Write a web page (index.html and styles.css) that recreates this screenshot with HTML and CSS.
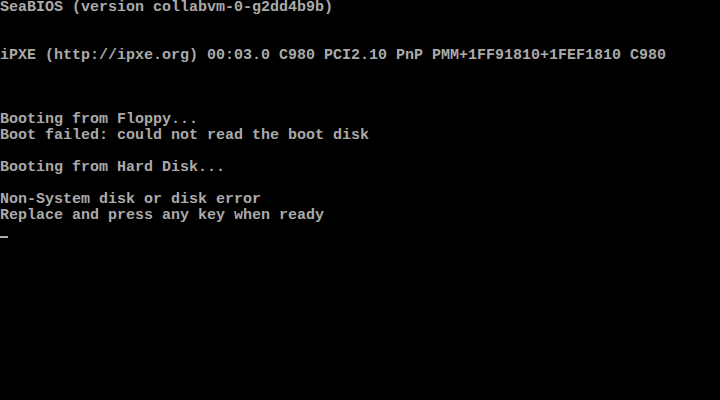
FILE: index.html
```html
<!DOCTYPE html>
<html>
<head>
<meta charset="utf-8">
<link rel="stylesheet" href="styles.css">
</head>
<body>
<div class="screen">
<div class="row">SeaBIOS (version collabvm-0-g2dd4b9b)</div>
<div class="row"></div>
<div class="row"></div>
<div class="row">iPXE (http://ipxe.org) 00:03.0 C980 PCI2.10 PnP PMM+1FF91810+1FEF1810 C980</div>
<div class="row"></div>
<div class="row"></div>
<div class="row"></div>
<div class="row">Booting from Floppy...</div>
<div class="row">Boot failed: could not read the boot disk</div>
<div class="row"></div>
<div class="row">Booting from Hard Disk...</div>
<div class="row"></div>
<div class="row">Non-System disk or disk error</div>
<div class="row">Replace and press any key when ready</div>
<div class="row"><span class="cursor"></span></div>
</div>
</body>
</html>
```
FILE: styles.css
```css
html, body {
  margin: 0;
  padding: 0;
  background: #000;
}
.screen {
  width: 720px;
  height: 400px;
  background: #000;
  color: #aaaaaa;
  font-family: "Liberation Mono", "DejaVu Sans Mono", monospace;
  font-size: 15px;
  font-weight: bold;
  overflow: hidden;
}
.row {
  height: 16px;
  line-height: 16px;
  white-space: pre;
}
.cursor {
  display: block;
  width: 8px;
  height: 2px;
  margin-top: 12px;
  background: #aaaaaa;
}
```
